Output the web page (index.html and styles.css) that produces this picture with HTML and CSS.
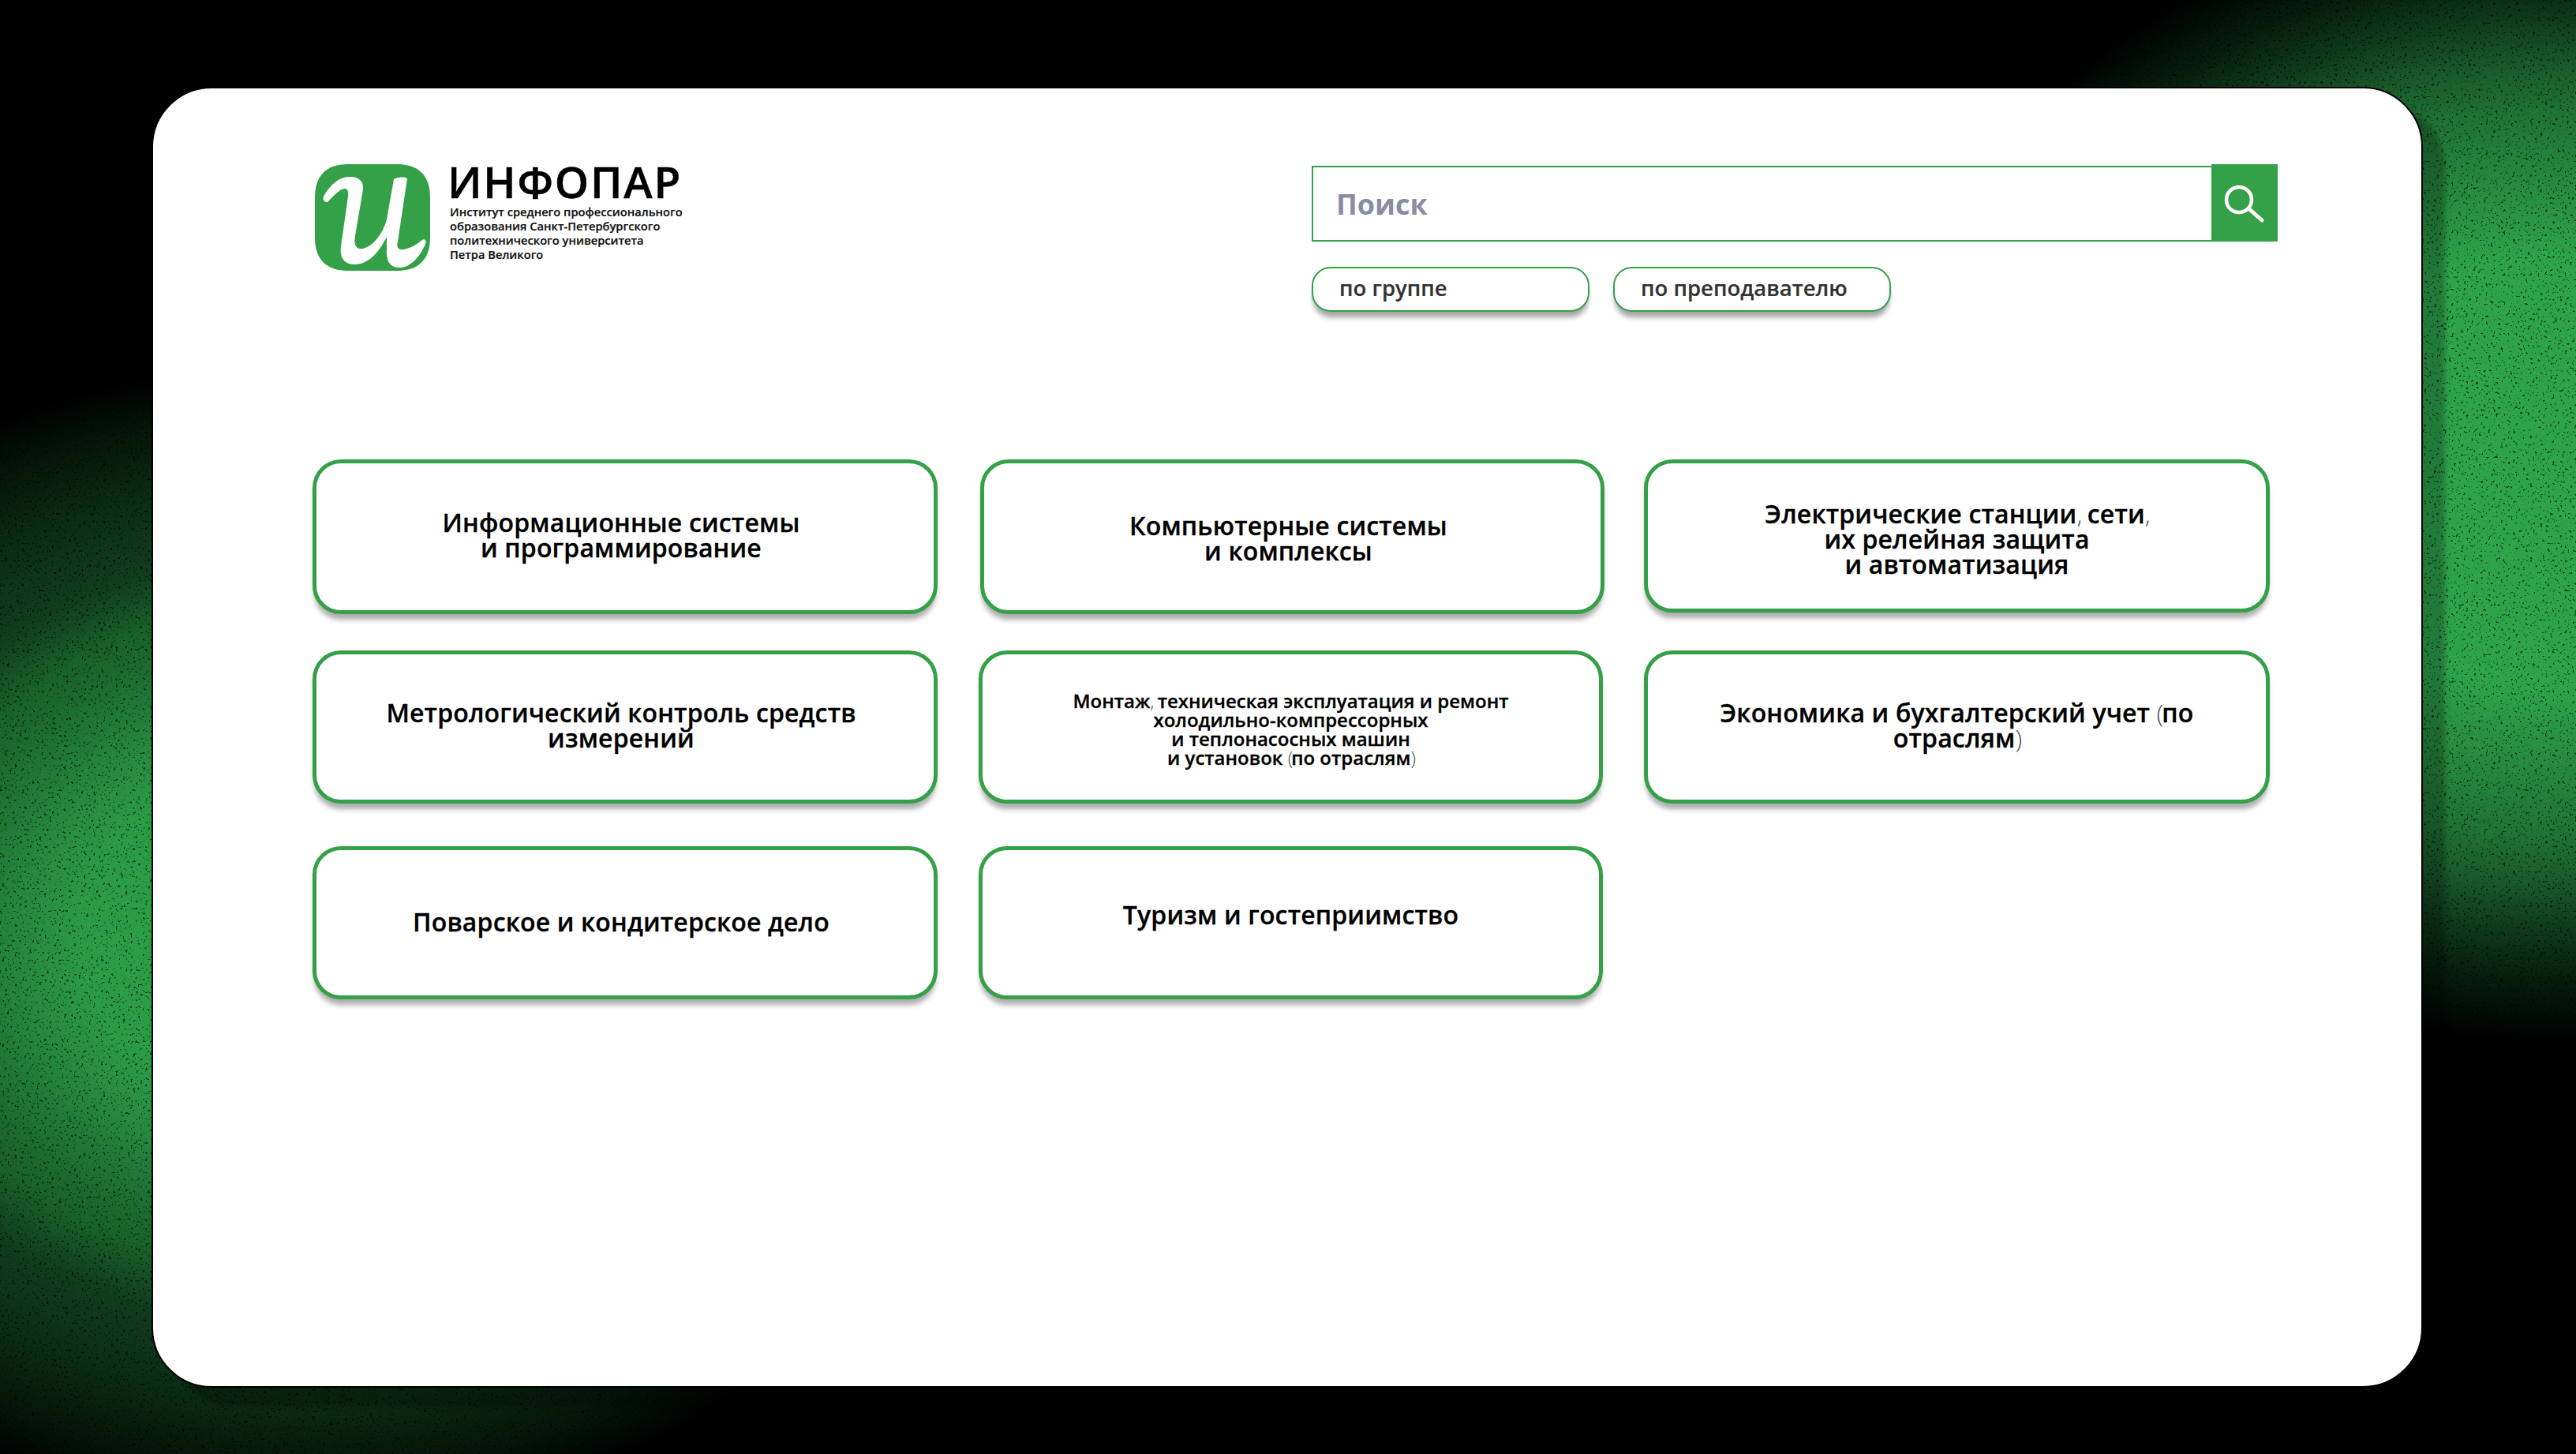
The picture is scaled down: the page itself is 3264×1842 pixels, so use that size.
FILE: index.html
```html
<!DOCTYPE html>
<html lang="ru">
<head>
    <meta charset="UTF-8">
    <meta name="viewport" content="width=device-width, initial-scale=1.0">
    <title>Инфопар</title>
    <link rel="stylesheet" href="styles.css">
</head>
<body>

    <!-- speckle over the green glow -->
    <svg class="bg-noise" width="3264" height="1842" aria-hidden="true">
        <filter id="grain" x="0" y="0" width="100%" height="100%">
            <feTurbulence type="fractalNoise" baseFrequency="0.32" numOctaves="2" seed="7"/>
            <feColorMatrix type="matrix" values="0 0 0 0 0  0 0 0 0 0  0 0 0 0 0  14 0 0 0 -9"/>
        </filter>
        <rect width="3264" height="1842" filter="url(#grain)" opacity="0.6"/>
    </svg>

    <main class="window">
        <header class="top">
            <a class="brand" href="#">
                <svg class="brand-logo" viewBox="0 0 146 135" width="146" height="135">
                    <path fill="#34a047" d="M42 0H104C132 0 146 15 146 42V93C146 120 132 135 104 135H42C14 135 0 120 0 93V42C0 15 14 0 42 0Z"/>
                    <path fill="#fff" d="M11 41C17 30 28 17 42 16C54 15 62 20 61 32L51 91C49 102 52 108 60 107C70 106 85 92 91 70L100 19C107 16 112 16 117 18L105 98C103 106 106 109 113 108C122 106 130 101 136 96C139 94 142 97 140 101C134 116 122 130 109 131C96 132 90 124 91 108L91 92C83 108 70 127 50 127C37 127 31 118 33 104L42 41C43 32 40 29 34 32C28 35 22 42 17 47C13 50 9 45 11 41Z"/>
                </svg>
                <div class="brand-text">
                    <div class="brand-name">ИНФОПАР</div>
                    <div class="brand-sub">Институт среднего профессионального<br>образования Санкт-Петербургского<br>политехнического университета<br>Петра Великого</div>
                </div>
            </a>

            <div class="search">
                <div class="search-row">
                    <div class="search-field">Поиск</div>
                    <button class="search-btn" type="button" aria-label="Поиск">
                        <svg viewBox="0 0 84 98" width="84" height="98">
                            <circle cx="35" cy="45" r="16" fill="none" stroke="#fff" stroke-width="4.5"/>
                            <path d="M47 56L64 71" fill="none" stroke="#fff" stroke-width="5" stroke-linecap="round"/>
                        </svg>
                    </button>
                </div>
                <div class="search-modes">
                    <a class="chip" href="#">по группе</a>
                    <a class="chip" href="#">по преподавателю</a>
                </div>
            </div>
        </header>

        <section class="cards">
            <a class="card card-raise card-offset" href="#"><span>Информационные системы<br>и программирование</span></a>
            <a class="card card-lower card-offset card-shift" href="#"><span>Компьютерные системы<br>и комплексы</span></a>
            <a class="card card-short card-low" href="#"><span>Электрические станции<i class="thin">,</i> сети<i class="thin">,</i><br>их релейная защита<br>и автоматизация</span></a>

            <a class="card card-raise card-offset" href="#"><span>Метрологический контроль средств<br>измерений</span></a>
            <a class="card card-small" href="#"><span>Монтаж<i class="thin">,</i> техническая эксплуатация и ремонт<br>холодильно-компрессорных<br>и теплонасосных машин<br>и установок <i class="thin">(</i>по отраслям<i class="thin">)</i></span></a>
            <a class="card card-raise" href="#"><span>Экономика и бухгалтерский учет <i class="thin">(</i>по<br>отраслям<i class="thin">)</i></span></a>

            <a class="card card-last card-offset" href="#"><span>Поварское и кондитерское дело</span></a>
            <a class="card card-last card-high" href="#"><span>Туризм и гостеприимство</span></a>
        </section>
    </main>

</body>
</html>
```

FILE: styles.css
```css
* {
    box-sizing: border-box;
}

body {
    margin: 0;
    width: 3264px;
    height: 1842px;
    padding: 110px 194px 84px 192px;
    overflow: hidden;
    position: relative;
    font-family: 'Open Sans', sans-serif;
    color: #000;
    background-color: #000;
    background-image:
        radial-gradient(ellipse 850px 720px at 3230px 600px, #2ea34a 0%, #2ea34a 38%, #2b9a45 42.5%, #1f7135 64%, #19592a 72%, #0f3b1b 80%, #072010 88%, #020a05 96%, rgba(0, 0, 0, 0) 100%),
        radial-gradient(ellipse 900px 730px at 390px 1190px, #2ea34a 0%, #2b9a45 32%, #26893e 40%, #1e7033 50%, #186029 58.5%, #113e1d 67%, #0f361a 72.5%, #0a2a14 81%, #06180b 90%, rgba(0, 0, 0, 0) 100%);
}

a {
    color: inherit;
    text-decoration: none;
}

.bg-noise {
    position: absolute;
    top: 0;
    left: 0;
}

.window {
    position: relative;
    height: 100%;
    padding: 96px 182px 0 202px;
    background-color: #fff;
    border: 2px solid #000;
    border-radius: 76px;
    box-shadow: 28px 24px 6px rgba(0, 0, 0, 0.25);
}

/* header */

.top {
    display: flex;
    justify-content: space-between;
    height: 374px;
}

.brand {
    display: flex;
    gap: 22px;
    height: 135px;
}

.brand-logo {
    display: block;
    flex-shrink: 0;
    margin-left: 3px;
}

.brand-text {
    margin-top: -5px;
}

.brand-name {
    font-size: 55px;
    line-height: 54px;
    font-weight: 600;
    letter-spacing: 1.8px;
    -webkit-text-stroke: 0.5px #000;
}

.brand-sub {
    margin-top: 2px;
    margin-left: 3px;
    font-size: 14.7px;
    line-height: 18px;
    font-weight: 600;
    color: #111;
    -webkit-text-stroke: 0.2px #111;
}

.search {
    width: 1224px;
}

.search-row {
    display: flex;
    height: 98px;
}

.search-field {
    flex: 1;
    margin-top: 2px;
    padding-left: 29px;
    border: 2px solid #34a047;
    border-right: 0;
    font-size: 36px;
    line-height: 94px;
    font-weight: 700;
    color: #8a8ca6;
}

.search-btn {
    width: 84px;
    padding: 0;
    border: 0;
    background-color: #34a047;
}

.search-btn svg {
    display: block;
}

.search-modes {
    display: flex;
    gap: 30px;
    margin-top: 32px;
}

.chip {
    width: 352px;
    height: 57px;
    padding-left: 33px;
    border: 2px solid #34a047;
    border-radius: 24px;
    font-size: 27.5px;
    line-height: 49px;
    font-weight: 600;
    color: #333;
    -webkit-text-stroke: 0.2px #333;
    background-color: #fff;
    box-shadow: 0 9px 6px -2px rgba(0, 0, 0, 0.35);
}

/* speciality cards */

.cards {
    display: grid;
    grid-template-columns: 792px 791px 793px;
    grid-template-rows: 196px 194px 202px;
    column-gap: 52px;
    row-gap: 46px;
}

.card {
    display: flex;
    align-items: center;
    justify-content: center;
    text-align: center;
    font-size: 32px;
    line-height: 32px;
    font-weight: 600;
    letter-spacing: 0.15px;
    -webkit-text-stroke: 0.3px #000;
    background-color: #fff;
    border: 5px solid #34a047;
    border-radius: 36px;
    box-shadow: 0 9px 6px -2px rgba(0, 0, 0, 0.32);
}

.card-offset {
    padding-right: 10px;
}

.card-shift {
    margin: 0 -2px 0 2px;
}

.card-short {
    height: 194px;
}

.card-low {
    padding-top: 8px;
}

.card-raise {
    padding-bottom: 4px;
}

.card-lower {
    padding-top: 3px;
}

.card-last {
    margin-top: 8px;
    padding-bottom: 2px;
}

.card-high {
    padding-bottom: 20px;
}

.card-small {
    font-size: 24px;
    line-height: 24px;
    letter-spacing: 0;
    padding-top: 6px;
}

.thin {
    font-style: normal;
    font-weight: 300;
    letter-spacing: -2px;
    color: #555;
    -webkit-text-stroke: 0;
}
```
